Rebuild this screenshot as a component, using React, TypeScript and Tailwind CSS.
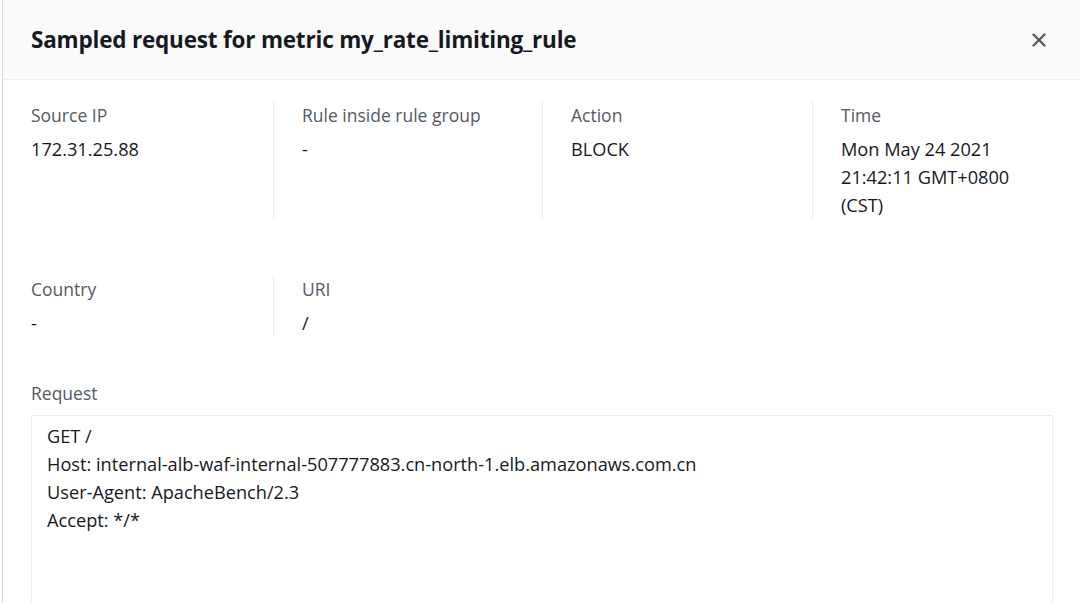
import { X } from 'lucide-react';

const font = { fontFamily: '"Open Sans", "Noto Sans", Arial, sans-serif' };

interface Field {
  label: string;
  lines: string[];
}

const rowOne: Field[] = [
  { label: 'Source IP', lines: ['172.31.25.88'] },
  { label: 'Rule inside rule group', lines: ['-'] },
  { label: 'Action', lines: ['BLOCK'] },
  { label: 'Time', lines: ['Mon May 24 2021', '21:42:11 GMT+0800', '(CST)'] },
];

const rowTwo: Field[] = [
  { label: 'Country', lines: ['-'] },
  { label: 'URI', lines: ['/'] },
];

const requestLines = [
  'GET /',
  'Host: internal-alb-waf-internal-507777883.cn-north-1.elb.amazonaws.com.cn',
  'User-Agent: ApacheBench/2.3',
  'Accept: */*',
];

function FieldRow({ fields }: { fields: Field[] }) {
  return (
    <div className="grid grid-cols-[270px_269px_270px_1fr]">
      {fields.map((f, i) => (
        <div
          key={f.label}
          className={`pl-[28px] flex flex-col gap-[6px] ${i > 0 ? 'border-l border-[#eaeded]' : ''}`}
        >
          <div className="text-[17.5px] leading-[28px] text-[#545b64]">{f.label}</div>
          <div className="text-[18.2px] leading-[28px] text-[#16191f]">
            {f.lines.map((l) => (
              <div key={l}>{l}</div>
            ))}
          </div>
        </div>
      ))}
    </div>
  );
}

export default function App() {
  return (
    <div className="w-[1080px] h-[603px] overflow-hidden bg-white pl-[2px]" style={font}>
      <div className="h-full border-l border-[#d5dbdb] flex flex-col">
        <div className="h-[80px] shrink-0 bg-[#fafafa] border-b border-[#eaeded] flex items-center justify-between pl-[28px] pr-[30px]">
          <h2 className="text-[22.5px] font-bold text-[#16191f] tracking-[-0.2px]">
            Sampled request for metric my_rate_limiting_rule
          </h2>
          <X className="w-[22px] h-[22px] text-[#545b64]" strokeWidth={2.6} />
        </div>

        <div className="pt-[21px] flex flex-col gap-[56px]">
          <FieldRow fields={rowOne} />
          <FieldRow fields={rowTwo} />
        </div>

        <div className="pl-[28px] pr-[27px] pt-[42px]">
          <div className="text-[17.5px] leading-[28px] text-[#545b64]">Request</div>
          <div className="mt-[8px] h-[260px] border border-[#eaeded] rounded-[2px] px-[15px] py-[6px] text-[18.2px] leading-[28px] text-[#16191f]">
            {requestLines.map((l) => (
              <div key={l}>{l}</div>
            ))}
          </div>
        </div>
      </div>
    </div>
  );
}
